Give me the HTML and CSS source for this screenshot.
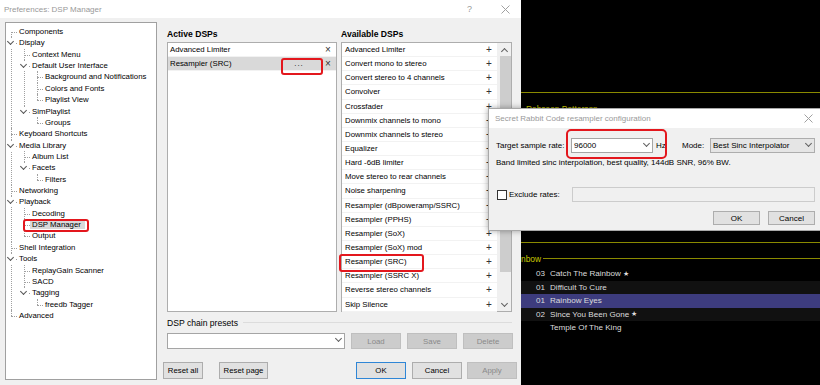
FILE: index.html
```html
<!doctype html>
<html lang="en">
  <head>
    <meta charset="UTF-8" />
    <meta name="viewport" content="width=device-width, initial-scale=1.0" />
    <title>Preferences: DSP Manager</title>
    <link rel="stylesheet" href="styles.css">
  </head>
  <body>
    <div class="desktop">
      <!-- Preferences window -->
      <div class="prefs">
        <div class="titlebar">
          <span class="title">Preferences: DSP Manager</span>
          <span class="help">?</span>
          <svg class="close" width="9" height="9" viewBox="0 0 9 9"><path d="M0.5 0.5L8.5 8.5M8.5 0.5L0.5 8.5" stroke="#a0a0a0" fill="none"/></svg>
        </div>

        <div class="prefs-body">
          <div class="tree-box">
            <ul class="tree">
              <li><span class="label">Components</span></li>
              <li class="open"><span class="twisty"></span><span class="label">Display</span>
                <ul>
                  <li><span class="label">Context Menu</span></li>
                  <li class="open"><span class="twisty"></span><span class="label">Default User Interface</span>
                    <ul>
                      <li><span class="label">Background and Notifications</span></li>
                      <li><span class="label">Colors and Fonts</span></li>
                      <li><span class="label">Playlist View</span></li>
                    </ul>
                  </li>
                  <li class="open"><span class="twisty"></span><span class="label">SimPlaylist</span>
                    <ul>
                      <li><span class="label">Groups</span></li>
                    </ul>
                  </li>
                </ul>
              </li>
              <li><span class="label">Keyboard Shortcuts</span></li>
              <li class="open"><span class="twisty"></span><span class="label">Media Library</span>
                <ul>
                  <li><span class="label">Album List</span></li>
                  <li class="open"><span class="twisty"></span><span class="label">Facets</span>
                    <ul>
                      <li><span class="label">Filters</span></li>
                    </ul>
                  </li>
                </ul>
              </li>
              <li><span class="label">Networking</span></li>
              <li class="open"><span class="twisty"></span><span class="label">Playback</span>
                <ul>
                  <li><span class="label">Decoding</span></li>
                  <li><span class="label selected">DSP Manager</span><span class="mark tree-mark"></span></li>
                  <li><span class="label">Output</span></li>
                </ul>
              </li>
              <li><span class="label">Shell Integration</span></li>
              <li class="open"><span class="twisty"></span><span class="label">Tools</span>
                <ul>
                  <li><span class="label">ReplayGain Scanner</span></li>
                  <li><span class="label">SACD</span></li>
                  <li class="open"><span class="twisty"></span><span class="label">Tagging</span>
                    <ul>
                      <li><span class="label">freedb Tagger</span></li>
                    </ul>
                  </li>
                </ul>
              </li>
              <li><span class="label">Advanced</span></li>
            </ul>
          </div>

          <div class="page">
            <div class="dsp-columns">
              <div class="dsp-col active-col">
                <h2>Active DSPs</h2>
                <div class="listbox">
                  <div class="row"><span class="name">Advanced Limiter</span><span class="remove">×</span></div>
                  <div class="row selected">
                    <span class="name">Resampler (SRC)</span>
                    <span class="config">...</span>
                    <span class="remove">×</span>
                    <span class="mark config-mark"></span>
                  </div>
                </div>
              </div>

              <div class="dsp-col available-col">
                <h2>Available DSPs</h2>
                <div class="listbox with-scroll">
                  <div class="rows">
                    <div class="row"><span class="name">Advanced Limiter</span><span class="add">+</span></div>
                    <div class="row"><span class="name">Convert mono to stereo</span><span class="add">+</span></div>
                    <div class="row"><span class="name">Convert stereo to 4 channels</span><span class="add">+</span></div>
                    <div class="row"><span class="name">Convolver</span><span class="add">+</span></div>
                    <div class="row"><span class="name">Crossfader</span><span class="add">+</span></div>
                    <div class="row"><span class="name">Downmix channels to mono</span><span class="add">+</span></div>
                    <div class="row"><span class="name">Downmix channels to stereo</span><span class="add">+</span></div>
                    <div class="row"><span class="name">Equalizer</span><span class="add">+</span></div>
                    <div class="row"><span class="name">Hard -6dB limiter</span><span class="add">+</span></div>
                    <div class="row"><span class="name">Move stereo to rear channels</span><span class="add">+</span></div>
                    <div class="row"><span class="name">Noise sharpening</span><span class="add">+</span></div>
                    <div class="row"><span class="name">Resampler (dBpoweramp/SSRC)</span><span class="add">+</span></div>
                    <div class="row"><span class="name">Resampler (PPHS)</span><span class="add">+</span></div>
                    <div class="row"><span class="name">Resampler (SoX)</span><span class="add">+</span></div>
                    <div class="row"><span class="name">Resampler (SoX) mod</span><span class="add">+</span></div>
                    <div class="row"><span class="name">Resampler (SRC)</span><span class="add">+</span><span class="mark src-mark"></span></div>
                    <div class="row"><span class="name">Resampler (SSRC X)</span><span class="add">+</span></div>
                    <div class="row"><span class="name">Reverse stereo channels</span><span class="add">+</span></div>
                    <div class="row"><span class="name">Skip Silence</span><span class="add">+</span></div>
                  </div>
                  <div class="scrollbar">
                    <span class="arrow up"></span>
                    <span class="thumb"></span>
                    <span class="arrow down"></span>
                  </div>
                </div>
              </div>
            </div>

            <div class="presets">
              <div class="group-label"><span>DSP chain presets</span><span class="rule"></span></div>
              <div class="preset-row">
                <div class="combo preset-combo"><span class="chevron"></span></div>
                <button class="btn" disabled>Load</button>
                <button class="btn" disabled>Save</button>
                <button class="btn" disabled>Delete</button>
              </div>
            </div>

            <div class="dialog-buttons">
              <button class="btn reset-all">Reset all</button>
              <button class="btn reset-page">Reset page</button>
              <button class="btn default ok">OK</button>
              <button class="btn">Cancel</button>
              <button class="btn" disabled>Apply</button>
            </div>
          </div>
        </div>
      </div>

      <!-- foobar2000 playlist behind -->
      <div class="playlist">
        <div class="sep"></div>
        <div class="group first-group"><span class="group-name">Rahsaan Patterson</span><span class="group-line"></span></div>
        <div class="sep second-sep"></div>
        <div class="group"><span class="group-name">nbow</span><span class="group-line"></span></div>
        <div class="track"><span class="no">03</span><span class="tname">Catch The Rainbow</span><span class="star">★</span></div>
        <div class="track alt"><span class="no">01</span><span class="tname">Difficult To Cure</span></div>
        <div class="track current"><span class="no">01</span><span class="tname">Rainbow Eyes</span></div>
        <div class="track alt"><span class="no">02</span><span class="tname">Since You Been Gone</span><span class="star">★</span></div>
        <div class="track"><span class="no"></span><span class="tname">Temple Of The King</span></div>
      </div>

      <!-- resampler configuration dialog -->
      <div class="popup">
        <div class="popup-title">
          <span>Secret Rabbit Code resampler configuration</span>
          <svg class="close" width="9" height="9" viewBox="0 0 9 9"><path d="M0.5 0.5L8.5 8.5M8.5 0.5L0.5 8.5" stroke="#a0a0a0" fill="none"/></svg>
        </div>
        <div class="popup-body">
          <div class="rate-row">
            <span class="rate-label">Target sample rate:</span>
            <div class="combo rate-combo"><span class="value">96000</span><span class="chevron"></span></div>
            <span class="hz">Hz</span>
            <span class="mode-label">Mode:</span>
            <div class="combo mode-combo"><span class="value">Best Sinc Interpolator</span><span class="chevron"></span></div>
            <span class="mark rate-mark"></span>
          </div>
          <div class="info">Band limited sinc interpolation, best quality, 144dB SNR, 96% BW.</div>
          <div class="exclude-row">
            <label class="check-label"><span class="checkbox"></span>Exclude rates:</label>
            <div class="field"></div>
          </div>
          <div class="popup-buttons">
            <button class="btn small">OK</button>
            <button class="btn small">Cancel</button>
          </div>
        </div>
      </div>
    </div>
  </body>
</html>
```

FILE: styles.css
```css
:root {
  --face: #f0f0f0;
  --border: #adadad;
  --tree-line: #a0a0a0;
  --mark: #e3171d;
  --olive: #8a8a00;
  --yellow: #c8c800;
}

* {
  box-sizing: border-box;
  margin: 0;
  padding: 0;
}

body {
  font-family: "Liberation Sans", Arial, sans-serif;
  font-size: 7.8px;
  color: #000;
  background: #000;
}

.desktop {
  position: relative;
  display: flex;
  width: 820px;
  height: 385px;
  overflow: hidden;
}

/* ---------- preferences window ---------- */

.prefs {
  width: 521px;
  flex: none;
  background: var(--face);
  display: flex;
  flex-direction: column;
}

.titlebar {
  height: 18px;
  background: #fff;
  display: flex;
  align-items: center;
  padding-left: 4px;
  color: #999;
  font-size: 8px;
}

.titlebar .title {
  flex: 1;
}

.titlebar .help {
  width: 10px;
  margin-right: 24px;
  font-size: 9px;
}

.titlebar .close {
  margin-right: 11px;
}

.prefs-body {
  display: flex;
  padding: 4px 0 0 5px;
  gap: 6px;
}

.tree-box {
  width: 152px;
  height: 358px;
  border: 1px solid var(--tree-line);
  background: #fff;
  padding-top: 3px;
}

.tree,
.tree ul {
  list-style: none;
}

.tree {
  padding-left: 5px;
}

.tree ul {
  padding-left: 5px;
}

.tree li {
  position: relative;
  padding-left: 8px;
  line-height: 11.36px;
  white-space: nowrap;
}

.tree li::before {
  content: "";
  position: absolute;
  left: 0;
  top: 6px;
  width: 6px;
  border-top: 1px dotted var(--tree-line);
}

.tree li::after {
  content: "";
  position: absolute;
  left: 0;
  top: 0;
  bottom: 0;
  border-left: 1px dotted var(--tree-line);
}

.tree li:last-child::after {
  bottom: auto;
  height: 6px;
}

.tree > li:first-child::after {
  top: 6px;
  bottom: 0;
  height: auto;
}

.twisty {
  position: absolute;
  z-index: 1;
  left: -5px;
  top: 1px;
  width: 10px;
  height: 10px;
  background: #fff;
}

.twisty::before {
  content: "";
  position: absolute;
  left: 2px;
  top: 1px;
  width: 4px;
  height: 4px;
  border-right: 1px solid #555;
  border-bottom: 1px solid #555;
  transform: rotate(45deg);
}

.label.selected {
  background: #d9d9d9;
  margin-left: -2px;
  padding: 0 4px 0 2px;
}

.mark {
  position: absolute;
  z-index: 2;
  border: 2px solid var(--mark);
  border-radius: 3px;
}

.tree-mark {
  left: -1px;
  top: 0;
  width: 66px;
  height: 13px;
}

/* ---------- DSP page ---------- */

.page {
  width: 354px;
  display: flex;
  flex-direction: column;
}

.dsp-columns {
  display: flex;
  gap: 4px;
  padding-left: 4px;
}

.dsp-col h2 {
  height: 20px;
  line-height: 24px;
  font-size: 8.6px;
  font-weight: bold;
}

.active-col {
  width: 170px;
}

.available-col {
  width: 171px;
}

.listbox {
  height: 270px;
  border: 1px solid var(--border);
  background: #fff;
}

.listbox .row {
  position: relative;
  display: flex;
  align-items: center;
  height: 14.15px;
  padding-left: 2px;
  border-bottom: 1px solid #f2f2f2;
  white-space: nowrap;
}

.listbox .row .name {
  flex: 1;
}

.listbox .row.selected {
  background: #d9d9d9;
}

.remove,
.add {
  width: 16px;
  text-align: center;
  font-size: 10px;
  color: #333;
}

.config {
  width: 40px;
  margin-right: 1px;
  text-align: center;
  letter-spacing: 1px;
}

.config-mark {
  left: 113px;
  top: 1px;
  width: 42px;
  height: 17px;
}

.with-scroll {
  display: flex;
}

.with-scroll .rows {
  flex: 1;
}

.with-scroll .row {
  padding-left: 3px;
}

.src-mark {
  left: -3px;
  top: -1px;
  width: 85px;
  height: 18px;
}

.scrollbar {
  width: 14px;
  background: var(--face);
  display: flex;
  flex-direction: column;
  align-items: center;
}

.scrollbar .arrow {
  height: 13px;
  width: 100%;
  position: relative;
}

.scrollbar .arrow::before {
  content: "";
  position: absolute;
  left: 5px;
  width: 4px;
  height: 4px;
  border-left: 1px solid #606060;
  border-top: 1px solid #606060;
}

.scrollbar .up::before {
  top: 6px;
  transform: rotate(45deg);
}

.scrollbar .down {
  margin-top: auto;
}

.scrollbar .down::before {
  top: 3px;
  transform: rotate(225deg);
}

.scrollbar .thumb {
  width: 11px;
  height: 216px;
  margin-left: 2px;
  background: #cdcdcd;
}

/* presets */

.group-label {
  height: 21px;
  display: flex;
  align-items: center;
  padding: 0 5px 0 4px;
  font-size: 8.6px;
}

.group-label .rule {
  flex: 1;
  margin-left: 5px;
  border-top: 1px solid #dcdcdc;
}

.preset-row {
  display: flex;
  gap: 6px;
  height: 16px;
  padding-left: 4px;
}

.combo {
  position: relative;
  display: flex;
  align-items: center;
  border: 1px solid #a5a5a5;
  background: #fff;
  padding-left: 2px;
}

.combo .value {
  flex: 1;
}

.chevron {
  width: 10px;
  height: 100%;
  position: relative;
  margin-left: auto;
}

.chevron::before {
  content: "";
  position: absolute;
  left: 2px;
  top: 2px;
  width: 4px;
  height: 4px;
  border-right: 1px solid #606060;
  border-bottom: 1px solid #606060;
  transform: rotate(45deg);
}

.preset-combo {
  width: 178px;
}

.preset-row .btn {
  width: 50px;
  height: 16px;
}

.btn {
  font: inherit;
  height: 17px;
  border: 1px solid var(--border);
  background: #e1e1e1;
  color: #000;
}

.btn.default {
  border-color: #2f86d6;
}

.btn:disabled {
  background: #cccccc;
  border-color: #bfbfbf;
  color: #8a8a8a;
}

.dialog-buttons {
  display: flex;
  margin-top: 13px;
  gap: 5px;
}

.dialog-buttons .btn {
  width: 50px;
}

.dialog-buttons .reset-all {
  width: 40px;
  margin-right: 11px;
}

.dialog-buttons .reset-page {
  width: 49px;
}

.dialog-buttons .ok {
  margin-left: auto;
  margin-right: 1px;
}

/* ---------- playlist ---------- */

.playlist {
  flex: 1;
  background: #000;
  padding-top: 92px;
  color: #dcdcdc;
  font-size: 8.1px;
}

.sep {
  height: 1px;
  background: var(--olive);
}

.group {
  display: flex;
  align-items: center;
  height: 17px;
  margin-top: 7px;
  color: var(--yellow);
  font-size: 8.4px;
}

.first-group {
  padding-left: 5px;
}

.group-line {
  flex: 1;
  margin-left: 2px;
  border-top: 1px solid var(--olive);
}

.second-sep {
  margin-top: 125px;
}

.track {
  display: flex;
  align-items: center;
  height: 13.5px;
  white-space: nowrap;
}

.track.alt {
  background: #111;
}

.track.current {
  background: #3d3c7e;
}

.track .no {
  width: 24px;
  text-align: right;
  margin-right: 5px;
}

.track .star {
  margin-left: 2px;
  font-size: 7px;
}

/* ---------- resampler dialog ---------- */

.popup {
  position: absolute;
  left: 488px;
  top: 108px;
  width: 340px;
  height: 123px;
  background: var(--face);
  border: 1px solid #a8a8a8;
  box-shadow: 0 0 6px rgba(0, 0, 0, 0.35);
  font-size: 8px;
}

.popup-title {
  height: 19px;
  background: #fff;
  display: flex;
  align-items: center;
  justify-content: space-between;
  padding: 0 14px 0 6px;
  color: #999;
}

.popup-body {
  padding: 0 12px 0 7px;
}

.rate-row {
  position: relative;
  display: flex;
  align-items: center;
  height: 15px;
  margin-top: 10px;
}

.rate-label {
  width: 75px;
}

.rate-combo {
  width: 82px;
  height: 15px;
}

.hz {
  width: 13px;
  margin-left: 3px;
}

.mode-label {
  width: 28px;
  margin-left: 13px;
}

.mode-combo {
  width: 105px;
  height: 15px;
  background: #e5e5e5;
  border-color: var(--border);
}

.rate-mark {
  left: 70px;
  top: -9px;
  width: 101px;
  height: 30px;
  border-radius: 5px;
}

.info {
  margin-top: 4px;
  line-height: 12px;
}

.exclude-row {
  display: flex;
  align-items: center;
  margin-top: 18px;
  height: 15px;
}

.check-label {
  display: flex;
  align-items: center;
  width: 76px;
}

.checkbox {
  width: 10px;
  height: 10px;
  margin: 0 2px 0 1px;
  border: 1px solid #333;
  background: #fff;
}

.field {
  width: 243px;
  height: 15px;
  border: 1px solid #cccccc;
  background: var(--face);
}

.popup-buttons {
  display: flex;
  justify-content: flex-end;
  gap: 8px;
  margin-top: 9px;
}

.btn.small {
  width: 47px;
  height: 14px;
}
```
